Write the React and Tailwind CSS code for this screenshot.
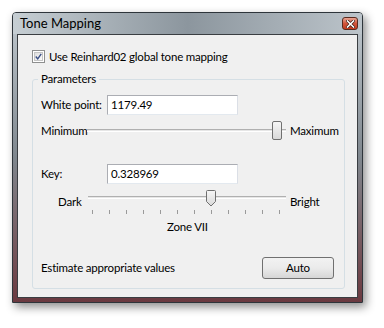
import React from 'react';

const font = { fontFamily: 'Lato, "Liberation Sans", sans-serif' };

const CloseButton = () => (
  <div className="w-[16px] h-[13px] rounded-[3px] border border-[#5a2a1e] bg-gradient-to-b from-[#e8a493] via-[#d0553b] to-[#c43c1f] flex items-center justify-center">
    <svg width="9" height="8" viewBox="0 0 9 8">
      <path d="M1.5 1 L7.5 7 M7.5 1 L1.5 7" stroke="#3a1a12" strokeWidth="3" strokeLinecap="square" />
      <path d="M1.5 1 L7.5 7 M7.5 1 L1.5 7" stroke="#ffffff" strokeWidth="1.6" strokeLinecap="square" />
    </svg>
  </div>
);

const Checkbox = () => (
  <div className="w-[13px] h-[13px] border border-[#8e8f8f] bg-white p-[1px] shrink-0">
    <div className="w-full h-full bg-gradient-to-br from-[#dedede] to-[#fbfbfb] border border-[#c5c5c5] flex items-center justify-center">
      <svg width="9" height="9" viewBox="0 0 9 9">
        <path d="M1 4.5 L3.5 7.5 L8 1" fill="none" stroke="#3b4f85" strokeWidth="1.8" />
      </svg>
    </div>
  </div>
);

const TextBox = ({ value }) => (
  <div className="w-[131px] h-[20px] shrink-0 border border-[#abadb3] border-b-[#e3e9ef] border-r-[#dbdfe6] bg-white flex items-center pl-[3px] text-black">
    {value}
  </div>
);

const Track = () => (
  <div className="absolute left-0 right-0 h-[3px] border-t border-[#b0b0b0] border-b border-b-white bg-[#e6e6e6]" />
);

const ticks = [0, 1, 2, 3, 4, 5, 6, 7, 8, 9, 10, 11];

const App = () => {
  return (
    <div className="w-[384px] h-[328px] bg-white pt-[12px] pl-[12px] whitespace-nowrap" style={font}>
      <div className="w-[351px] h-[291px] border border-[#2e353b] rounded-t-[4px] flex flex-col shadow-[3px_4px_10px_rgba(0,0,0,0.45)] bg-gradient-to-b from-[#c2cad0] via-[#7f878e] to-[#6b3a41]">
        <div className="h-[21px] flex items-center justify-between pl-[7px] pr-[4px] bg-gradient-to-r from-[#c6ced3] via-[#8c969e] to-[#bcc4ca] rounded-t-[3px]">
          <span className="text-[13px] text-black leading-none">Tone Mapping</span>
          <CloseButton />
        </div>
        <div className="mx-[4px] mb-[4px] flex-1 border border-[#3a3e42] bg-[#f0f0f0] flex flex-col text-[11.5px] tracking-[-0.2px] text-black">
          <div className="flex items-center gap-[4px] pl-[14px] pt-[15px] h-[28px]">
            <Checkbox />
            <span className="leading-none">Use Reinhard02 global tone mapping</span>
          </div>
          <div className="relative ml-[14px] mt-[16px] w-[313px] h-[210px] border border-[#d5dfe5] rounded-[3px] flex flex-col pl-[8px]">
            <span className="absolute -top-[9px] left-[5px] px-[3px] bg-[#f0f0f0] leading-[16px]">Parameters</span>

            <div className="flex items-center mt-[15px] h-[20px]">
              <span className="w-[66px] shrink-0">White point:</span>
              <TextBox value="1179.49" />
            </div>

            <div className="flex items-center mt-[6px] h-[19px]">
              <span className="w-[46px] shrink-0">Minimum</span>
              <div className="relative w-[199px] h-[19px] shrink-0 flex items-center">
                <Track />
                <div className="absolute left-[185px] top-0 w-[10px] h-[19px] rounded-[2px] border border-[#707070] bg-gradient-to-b from-[#f6f6f6] to-[#d9d9d9]" />
              </div>
              <span className="ml-[4px]">Maximum</span>
            </div>

            <div className="flex items-center mt-[24px] h-[20px]">
              <span className="w-[66px] shrink-0">Key:</span>
              <TextBox value="0.328969" />
            </div>

            <div className="flex items-start mt-[6px] h-[24px]">
              <span className="w-[47px] shrink-0 pl-[17px] mt-[4px] leading-[15px]">Dark</span>
              <div className="relative w-[198px] h-[24px] shrink-0">
                <div className="absolute left-0 right-0 top-[6px]">
                  <Track />
                </div>
                {ticks.map((t) => (
                  <div
                    key={t}
                    className="absolute top-[20px] w-[1px] h-[4px] bg-[#9a9a9a]"
                    style={{ left: 4 + t * 17 }}
                  />
                ))}
                <svg className="absolute left-[118px] top-0" width="10" height="17" viewBox="0 0 10 17">
                  <defs>
                    <linearGradient id="th" x1="0" y1="0" x2="0" y2="1">
                      <stop offset="0" stopColor="#f7f7f7" />
                      <stop offset="1" stopColor="#d8d8d8" />
                    </linearGradient>
                  </defs>
                  <path d="M1.5 0.5 H8.5 Q9.5 0.5 9.5 1.5 V11.5 L5 16 L0.5 11.5 V1.5 Q0.5 0.5 1.5 0.5 Z" fill="url(#th)" stroke="#707070" />
                </svg>
              </div>
              <span className="ml-[4px] mt-[4px] leading-[15px]">Bright</span>
            </div>

            <div className="mt-[5px] h-[16px] pl-[126px] leading-[16px]">Zone VII</div>

            <div className="flex items-center justify-between mt-[22px] h-[22px] pr-[10px]">
              <span>Estimate appropriate values</span>
              <div className="w-[72px] h-[22px] rounded-[3px] border border-[#707070] bg-gradient-to-b from-[#f2f2f2] via-[#ebebeb] to-[#d6d6d6] flex items-center justify-center">
                Auto
              </div>
            </div>
          </div>
        </div>
      </div>
    </div>
  );
};

export default App;
